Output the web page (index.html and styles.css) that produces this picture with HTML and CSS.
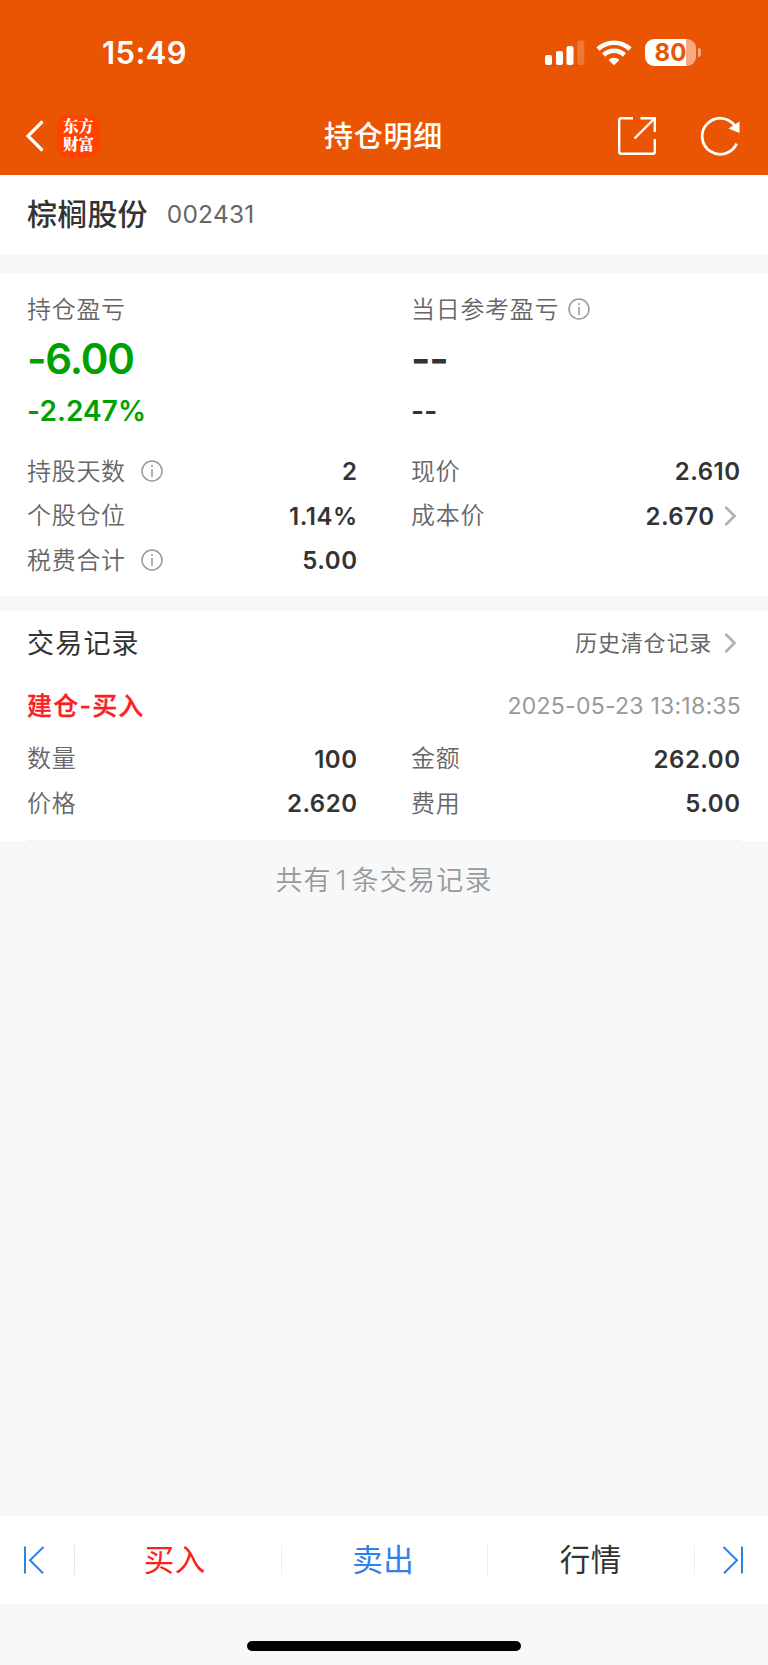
FILE: index.html
```html
<!DOCTYPE html>
<html lang="zh-CN">
  <head>
    <meta charset="UTF-8" />
    <meta name="viewport" content="width=device-width, initial-scale=1.0" />
    <title>持仓明细</title>
    <link rel="stylesheet" href="styles.css">
  </head>
  <body>
    <header class="header">
      <div class="status-bar">
        <span class="clock">15:49</span>
        <div class="status-icons">
          <svg class="signal" width="40" height="26" viewBox="0 0 40 26" fill="#fff">
            <rect x="0" y="15" width="7" height="10" rx="2" />
            <rect x="11" y="11" width="7" height="14" rx="2" />
            <rect x="21.5" y="6" width="7" height="19" rx="2" />
            <rect x="32.3" y="0.5" width="7" height="24.5" rx="2" opacity="0.2" />
          </svg>
          <svg class="wifi" width="36" height="26" viewBox="0 0 36 26" fill="none" stroke="#fff" stroke-width="4.6">
            <path d="M2 9.2a23 23 0 0 1 32 0" />
            <path d="M7.6 15a15 15 0 0 1 20.8 0" />
            <path d="M18 25.2l-5.4-5.3a7.8 7.8 0 0 1 10.8 0z" fill="#fff" stroke="none" />
          </svg>
          <div class="battery"><span>80</span></div>
          <i class="battery-tip"></i>
        </div>
      </div>
      <nav class="nav">
        <div class="nav-left">
          <svg width="20" height="32" viewBox="0 0 20 32" fill="none" stroke="#fff" stroke-width="3.2">
            <path d="M17.5 1.5L3 16l14.500 14.500" />
          </svg>
          <div class="logo"><div>东方</div><div>财富</div></div>
        </div>
        <h1>持仓明细</h1>
        <div class="nav-right">
          <svg width="40" height="40" viewBox="0 0 40 40" fill="none" stroke="#fff" stroke-width="2.4">
            <path d="M16 2.200H4.200a2 2 0 0 0-2 2v31.600a2 2 0 0 0 2 2h31.600a2 2 0 0 0 2-2V23" />
            <path d="M23.500 2.200h14.300V16M37.500 2.500L17.500 22.500" />
          </svg>
          <svg width="42" height="40" viewBox="0 0 42 40" fill="none" stroke="#fff" stroke-width="2.8">
            <path d="M36.600 27.600A18 18 0 1 1 34.600 9.500" />
            <path d="M28.500 12.600L39.500 5.500V17z" fill="#fff" stroke="none" />
          </svg>
        </div>
      </nav>
    </header>

    <section class="stock">
      <h2>棕榈股份</h2>
      <span class="code">002431</span>
    </section>

    <section class="position">
      <div class="profit">
        <div class="label">持仓盈亏</div>
        <div class="amount green">-6.00</div>
        <div class="percent green">-2.247%</div>
      </div>
      <div class="profit">
        <div class="label">当日参考盈亏
          <svg class="info near" viewBox="0 0 22 22"><circle cx="11" cy="11" r="10" /><path d="M11 9v8M11 5v2" /></svg>
        </div>
        <div class="amount">--</div>
        <div class="percent">--</div>
      </div>
      <div class="row">
        <span class="label">持股天数
          <svg class="info" viewBox="0 0 22 22"><circle cx="11" cy="11" r="10" /><path d="M11 9v8M11 5v2" /></svg>
        </span>
        <b>2</b>
      </div>
      <div class="row">
        <span class="label">现价</span>
        <b>2.610</b>
      </div>
      <div class="row">
        <span class="label">个股仓位</span>
        <b>1.14%</b>
      </div>
      <div class="row">
        <span class="label">成本价</span>
        <b>2.670</b>
        <svg class="arrow" viewBox="0 0 12 20"><path d="M1.500 1l9 9-9 9" /></svg>
      </div>
      <div class="row">
        <span class="label">税费合计
          <svg class="info" viewBox="0 0 22 22"><circle cx="11" cy="11" r="10" /><path d="M11 9v8M11 5v2" /></svg>
        </span>
        <b>5.00</b>
      </div>
    </section>

    <section class="records">
      <div class="records-head">
        <h3>交易记录</h3>
        <a class="history">历史清仓记录</a>
        <svg class="arrow" viewBox="0 0 12 20"><path d="M1.500 1l9 9-9 9" /></svg>
      </div>
      <div class="record">
        <div class="record-title">
          <span class="type">建仓-买入</span>
          <time>2025-05-23 13:18:35</time>
        </div>
        <div class="record-grid">
          <div class="row"><span class="label">数量</span><b>100</b></div>
          <div class="row"><span class="label">金额</span><b>262.00</b></div>
          <div class="row"><span class="label">价格</span><b>2.620</b></div>
          <div class="row"><span class="label">费用</span><b>5.00</b></div>
        </div>
      </div>
    </section>

    <p class="total">共有<span>1</span>条交易记录</p>

    <footer class="toolbar">
      <a class="step">
        <svg width="22" height="28" viewBox="0 0 22 28"><path d="M2 .500v27M20.500 1L7 14.200l13 13" /></svg>
      </a>
      <a class="tab buy">买入</a>
      <a class="tab sell">卖出</a>
      <a class="tab">行情</a>
      <a class="step last">
        <svg width="22" height="28" viewBox="0 0 22 28"><path d="M20 .500v27M1.500 1L15 14.200l-13 13" /></svg>
      </a>
    </footer>
    <div class="home"></div>
  </body>
</html>
```

FILE: styles.css
```css
* {
  box-sizing: border-box;
}

body {
  margin: 0;
  height: 1665px;
  display: flex;
  flex-direction: column;
  font-family: Inter, "Noto Sans CJK SC", sans-serif;
  color: #333;
  background-color: #f7f8fa;
}

h1, h2, h3, p {
  margin: 0;
}

svg {
  display: block;
  flex: none;
}

/* header */
.header {
  height: 174.500px;
  background-color: #ea5504;
  color: #fff;
}

.status-bar {
  height: 97px;
  padding: 8px 67px 0 102px;
  display: flex;
  justify-content: space-between;
  align-items: center;
}

.clock {
  font-size: 31px;
  font-weight: 600;
  letter-spacing: 0.400px;
}

.status-icons {
  display: flex;
  align-items: center;
}

.wifi {
  margin: 0 13px 0 12px;
}

.signal {
  margin-right: -1px;
}

.battery {
  width: 51px;
  height: 27px;
  border-radius: 9px;
  background: linear-gradient(to right, #fff 41px, #f5aa82 41px);
  color: #ea5504;
  font-size: 24px;
  font-weight: 700;
  line-height: 27px;
  text-align: center;
}

.battery-tip {
  width: 3px;
  height: 9px;
  margin-left: 2px;
  border-radius: 0 4px 4px 0;
  background-color: #f5aa82;
}

.nav {
  height: 77px;
  padding: 0 26px 0 25px;
  display: grid;
  grid-template-columns: 1fr auto 1fr;
  align-items: center;
}

.nav-left {
  display: flex;
  align-items: center;
  gap: 12px;
}

.logo {
  width: 43px;
  height: 42px;
  padding-top: 3px;
  border-radius: 9px;
  background-color: #ff4200;
  font-family: "Liberation Serif", "Noto Serif CJK SC", "Noto Sans CJK SC", serif;
  font-size: 15.500px;
  font-weight: 900;
  line-height: 18px;
  text-align: center;
}

.nav h1 {
  padding-bottom: 4px;
  font-size: 29px;
  font-weight: 500;
  letter-spacing: 0.700px;
}

.nav-right {
  display: flex;
  justify-content: flex-end;
  gap: 43px;
}

/* stock name */
.stock {
  height: 80.500px;
  padding: 0 27px 2px;
  display: flex;
  align-items: center;
  gap: 19px;
  background-color: #fff;
}

.stock h2 {
  padding-bottom: 4px;
  font-size: 30px;
  font-weight: 500;
  letter-spacing: 0.200px;
}

.code {
  font-size: 24.500px;
  letter-spacing: 0.200px;
  color: #666;
}

/* position */
.position {
  height: 323px;
  margin-top: 18px;
  padding: 19px 28px 0 27px;
  display: grid;
  grid-template-columns: 330px 329px;
  grid-template-rows: 157px;
  grid-auto-rows: 44.600px;
  column-gap: 54px;
  background-color: #fff;
}

.label {
  display: flex;
  align-items: center;
  font-size: 24px;
  font-weight: 350;
  letter-spacing: 0.700px;
  line-height: 36px;
  color: #666;
}

.row .label {
  padding-top: 1px;
}

.amount {
  margin-top: 4px;
  font-size: 42px;
  font-weight: 600;
  letter-spacing: -1.200px;
  line-height: 54px;
}

.percent {
  margin-top: 3px;
  font-size: 28px;
  font-weight: 600;
  letter-spacing: 0.100px;
  line-height: 44px;
}

.green {
  color: #00a000;
}

.info {
  width: 22px;
  height: 22px;
  margin: 0 0 2px 15px;
  fill: none;
  stroke: #999;
  stroke-width: 1.500;
}

.info.near {
  margin-left: 9px;
}

.row {
  display: flex;
  align-items: center;
}

.row b {
  margin-left: auto;
  margin-right: -0.500px;
  padding-top: 1px;
  font-size: 24px;
  font-weight: 600;
  letter-spacing: 0.500px;
}

.arrow {
  width: 12px;
  height: 20px;
  margin: 0 4px 0 10px;
  fill: none;
  stroke: #b2b2b2;
  stroke-width: 2.700;
}

/* records */
.records {
  height: 230.500px;
  margin-top: 14.500px;
  padding: 0 27px;
  background-color: #fff;
}

.records-head {
  height: 64px;
  padding-right: 1px;
  display: flex;
  align-items: center;
}

.records-head h3 {
  margin-right: auto;
  padding-bottom: 2px;
  font-size: 27px;
  font-weight: 400;
  letter-spacing: 1.200px;
}

.history {
  margin-right: 2px;
  padding-bottom: 4px;
  font-size: 22px;
  letter-spacing: 0.800px;
  color: #666;
}

.record {
  height: 166px;
  border-bottom: 1px solid #f2f3f5;
}

.record-title {
  height: 62px;
  display: flex;
  justify-content: space-between;
  align-items: center;
}

.type {
  padding-bottom: 4px;
  font-size: 25px;
  font-weight: 500;
  letter-spacing: 1.200px;
  color: #fb2020;
  -webkit-text-stroke: 0.300px #fb2020;
}

time {
  font-size: 23px;
  letter-spacing: 0.250px;
  color: #999;
}

.record-grid {
  display: grid;
  grid-template-columns: 330px 329px;
  grid-auto-rows: 44.600px;
  column-gap: 54px;
}

.total {
  padding-top: 20px;
  font-size: 27px;
  font-weight: 350;
  letter-spacing: 1.200px;
  line-height: 40px;
  text-align: center;
  color: #999;
}

.total span {
  margin: 0 4px;
}

/* bottom bar */
.toolbar {
  height: 88px;
  margin-top: auto;
  display: flex;
  align-items: center;
  background-color: #fff;
}

.step {
  width: 75px;
  height: 30px;
  padding-left: 23px;
  display: flex;
  align-items: center;
  border-right: 1px solid #e8e8e8;
}

.step.last {
  width: 73px;
  padding-left: 27px;
  border-right: none;
}

.step svg {
  fill: none;
  stroke: #3080e8;
  stroke-width: 2;
}

.tab {
  width: 206.500px;
  height: 30px;
  border-right: 1px solid #eee;
  font-size: 30.500px;
  letter-spacing: 0.500px;
  line-height: 29px;
  text-align: center;
}

.buy {
  padding-right: 6px;
  color: #fb2020;
}

.sell {
  padding-right: 2px;
  color: #3080e8;
}

.home {
  width: 274px;
  height: 10px;
  margin: 36.500px auto 14.500px;
  border-radius: 5px;
  background-color: #000;
}
```
